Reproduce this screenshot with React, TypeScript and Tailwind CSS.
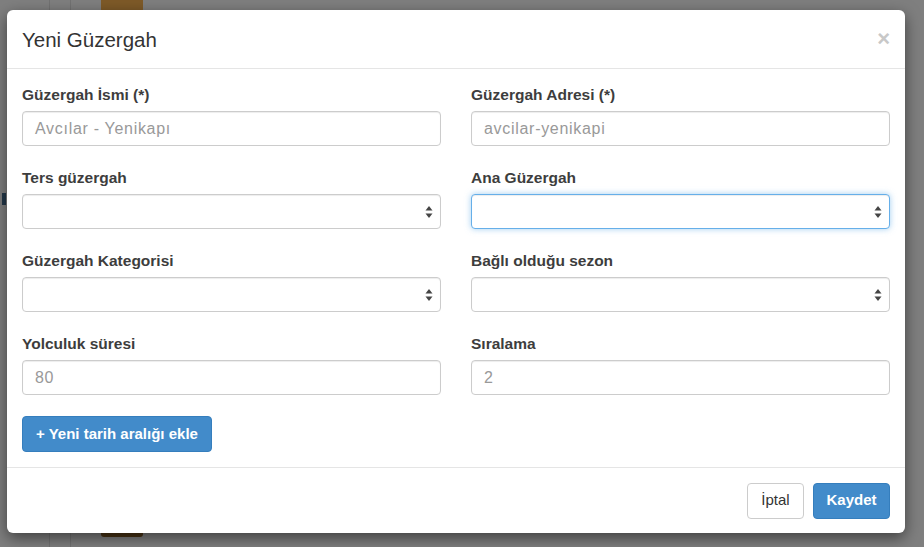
import React from "react";

const font = { fontFamily: '"Liberation Sans", Arial, Helvetica, sans-serif' };

function Arrows() {
  return (
    <svg width="8" height="13" viewBox="0 0 8 13" className="absolute right-[7px] top-1/2 -translate-y-1/2">
      <path d="M4 0.5 L7.5 5 L0.5 5 Z" fill="#444" />
      <path d="M4 12.5 L7.5 8 L0.5 8 Z" fill="#444" />
    </svg>
  );
}

function Field({
  label,
  kind,
  value,
  placeholder,
  focused,
}: {
  label: string;
  kind: "input" | "select";
  value?: string;
  placeholder?: string;
  focused?: boolean;
}) {
  const border = focused
    ? "border-[#66afe9] shadow-[inset_0_1px_1px_rgba(0,0,0,0.075),0_0_6px_rgba(102,175,233,0.6)]"
    : "border-[#cccccc] shadow-[inset_0_1px_1px_rgba(0,0,0,0.075)]";
  return (
    <div className="mb-[21px]">
      <div className="h-[22px] leading-[22px] mb-[5px] text-[15.5px] font-bold text-[#3d3d3d]">{label}</div>
      <div className={`relative h-[35px] rounded-[4px] border bg-white ${border}`}>
        {kind === "input" ? (
          <div className="h-full flex items-center pl-[12px] text-[16px] tracking-[0.7px] text-[#999999]">
            {placeholder ?? value}
          </div>
        ) : (
          <Arrows />
        )}
      </div>
    </div>
  );
}

export default function App() {
  return (
    <div className="relative w-[924px] h-[547px] overflow-hidden bg-[#7f7f7f]" style={font}>
      {/* background page bits behind overlay */}
      <div className="absolute left-[49px] top-0 h-full w-px bg-[#727272]" />
      <div className="absolute left-[70px] top-0 h-full w-px bg-[#727272]" />
      <div className="absolute left-[101px] top-0 w-[42px] h-[12px] rounded-b-[3px] bg-[#7e5a28]" />
      <div className="absolute left-[101px] top-[528px] w-[42px] h-[9px] rounded-b-[3px] bg-[#4a3314]" />
      <div className="absolute left-[2px] top-[193px] w-[4px] h-[12px] bg-[#23384a]" />

      <div className="relative pt-[10px] pl-[7px]">
        <div className="w-[898px] h-[523px] rounded-[6px] bg-white shadow-[0_5px_15px_rgba(0,0,0,0.5)] flex flex-col">
          {/* header */}
          <div className="h-[59px] border-b border-[#e5e5e5] px-[15px] flex items-center justify-between">
            <div className="text-[20.5px] text-[#333333] mt-[2px]">Yeni Güzergah</div>
            <div className="text-[22px] font-bold leading-none text-[#c8c8c8] mt-[0px]">×</div>
          </div>
          {/* body */}
          <div className="px-[15px] pt-[15px] pb-[15px] border-b border-[#e5e5e5]">
            <div className="grid grid-cols-2 gap-x-[30px]">
              <Field label="Güzergah İsmi (*)" kind="input" placeholder="Avcılar - Yenikapı" />
              <Field label="Güzergah Adresi (*)" kind="input" placeholder="avcilar-yenikapi" />
              <Field label="Ters güzergah" kind="select" />
              <Field label="Ana Güzergah" kind="select" focused />
              <Field label="Güzergah Kategorisi" kind="select" />
              <Field label="Bağlı olduğu sezon" kind="select" />
              <Field label="Yolculuk süresi" kind="input" value="80" />
              <Field label="Sıralama" kind="input" value="2" />
            </div>
            <div className="flex">
              <div className="h-[36px] px-[13px] rounded-[4px] bg-[#428bca] border border-[#357ebd] text-white text-[15px] font-bold flex items-center">
                + Yeni tarih aralığı ekle
              </div>
            </div>
          </div>
          {/* footer */}
          <div className="flex-1 px-[15px] flex items-center justify-end gap-[9px]">
            <div className="h-[36px] w-[57px] rounded-[4px] border border-[#cccccc] bg-white text-[15px] text-[#333333] flex items-center justify-center">
              İptal
            </div>
            <div className="h-[36px] w-[77px] rounded-[4px] border border-[#357ebd] bg-[#428bca] text-[15px] font-bold text-white flex items-center justify-center">
              Kaydet
            </div>
          </div>
        </div>
      </div>
    </div>
  );
}
